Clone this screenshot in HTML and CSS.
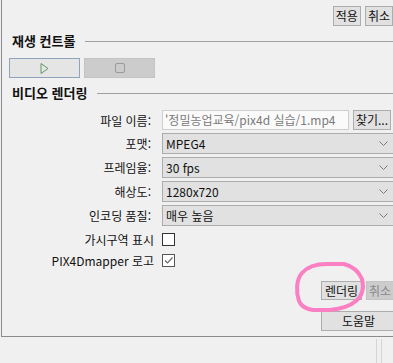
FILE: index.html
```html
<!DOCTYPE html>
<html lang="ko">

<head>
    <meta charset="UTF-8">
    <meta name="viewport" content="width=device-width, initial-scale=1.0">
    <title>비디오 렌더링</title>
    <link rel="stylesheet" href="styles.css">
</head>

<body>
    <div class="panel">
        <div class="top-actions">
            <button class="btn">적용</button>
            <button class="btn">취소</button>
        </div>

        <!-- Playback -->
        <div class="section-title"><span>재생 컨트롤</span><i class="rule"></i></div>
        <div class="playback">
            <button class="play-btn">
                <svg width="9" height="11" viewBox="0 0 9 11"><path d="M1 0.5 L8 5.5 L1 10.5 Z" fill="none" stroke="#5e9b5e" stroke-width="1"/></svg>
            </button>
            <button class="stop-btn">
                <svg width="10" height="10" viewBox="0 0 10 10"><rect x="0.5" y="0.5" width="9" height="9" rx="1.5" fill="none" stroke="#9a9a9a"/></svg>
            </button>
        </div>

        <!-- Video rendering -->
        <div class="section-title second"><span>비디오 렌더링</span><i class="rule"></i></div>
        <div class="form">
            <div class="row file-row">
                <label>파일 이름:</label>
                <div class="field">
                    <div class="path-input">'정밀농업교육/pix4d 실습/1.mp4</div>
                    <button class="btn find-btn">찾기...</button>
                </div>
            </div>
            <div class="row">
                <label>포맷:</label>
                <div class="combo">MPEG4<svg class="chev" width="9" height="5" viewBox="0 0 9 5"><path d="M0.5 0.5 L4.5 4.5 L8.5 0.5" fill="none" stroke="#7a7a7a"/></svg></div>
            </div>
            <div class="row">
                <label>프레임율:</label>
                <div class="combo">30 fps<svg class="chev" width="9" height="5" viewBox="0 0 9 5"><path d="M0.5 0.5 L4.5 4.5 L8.5 0.5" fill="none" stroke="#7a7a7a"/></svg></div>
            </div>
            <div class="row">
                <label>해상도:</label>
                <div class="combo">1280x720<svg class="chev" width="9" height="5" viewBox="0 0 9 5"><path d="M0.5 0.5 L4.5 4.5 L8.5 0.5" fill="none" stroke="#7a7a7a"/></svg></div>
            </div>
            <div class="row">
                <label>인코딩 품질:</label>
                <div class="combo">매우 높음<svg class="chev" width="9" height="5" viewBox="0 0 9 5"><path d="M0.5 0.5 L4.5 4.5 L8.5 0.5" fill="none" stroke="#7a7a7a"/></svg></div>
            </div>
            <div class="row check-row">
                <label>가시구역 표시</label>
                <span class="checkbox"></span>
            </div>
            <div class="row check-row">
                <label>PIX4Dmapper 로고</label>
                <span class="checkbox checked">
                    <svg width="11" height="11" viewBox="0 0 11 11"><path d="M2 5.5 L4.5 8 L9.5 2.5" fill="none" stroke="#6a6a6a" stroke-width="1.2"/></svg>
                </span>
            </div>
        </div>

        <div class="render-actions">
            <button class="btn render-btn">렌더링</button>
            <button class="btn disabled">취소</button>
        </div>
        <div class="help-actions">
            <button class="btn help-btn">도움말</button>
        </div>
    </div>

    <div class="footer">
        <i class="grip"></i>
        <i class="grip"></i>
    </div>

    <!-- hand drawn mark over the render button -->
    <svg class="mark" width="393" height="363" viewBox="0 0 393 363">
        <path d="M299 301 C296 292 296 280 302 273 C307 267 316 264 327 264 L344 264 C352 266 358 270 362 279 C364 287 363 295 356 301 C350 306 340 309 330 310 L313 310 C306 309 301 306 299 301" fill="none" stroke="#fb7fc3" stroke-width="4" stroke-linejoin="round"/>
    </svg>
</body>

</html>
```

FILE: styles.css
```css
/* General */
body {
    margin: 0;
    background: #f0f0f0;
    font-family: "Noto Sans CJK KR", "Noto Sans", sans-serif;
    font-size: 12px;
    color: #111;
    overflow: hidden;
    width: 393px;
    height: 363px;
    position: relative;
}

.panel {
    margin-left: 1px;
    width: 395px;
    height: 337px;
    box-sizing: border-box;
    border-left: 1px solid #8b8b8f;
    border-bottom: 1px solid #8b8b8f;
}

.btn {
    font-family: inherit;
    font-size: 12px;
    line-height: 16px;
    height: 20px;
    padding: 0 2px;
    margin: 0;
    background: #e1e1e1;
    border: 1px solid #adadad;
    color: #111;
}

/* Top */
.top-actions {
    display: flex;
    justify-content: flex-end;
    gap: 4px;
    padding: 6px 3px 0 0;
    height: 20px;
}

.section-title {
    display: flex;
    align-items: center;
    height: 16px;
    margin-top: 7px;
    padding-left: 10px;
    font-size: 13px;
    font-weight: bold;
    line-height: 16px;
}

.section-title .rule {
    flex: 1;
    height: 1px;
    background: #a0a0a0;
    margin-left: 10px;
}

.section-title.second {
    margin-top: 7px;
}

/* Playback */
.playback {
    display: flex;
    gap: 4px;
    padding-left: 7px;
    margin-top: 9px;
}

.play-btn,
.stop-btn {
    width: 71px;
    height: 20px;
    padding: 0;
    margin: 0;
    display: flex;
    align-items: center;
    justify-content: center;
}

.play-btn {
    background: #e5e5e5;
    border: 1px solid #8fa4bc;
}

.stop-btn {
    background: #cccccc;
    border: 1px solid #c4c4c4;
}

/* Form */
.form {
    margin-top: 9px;
}

.row {
    display: flex;
    align-items: center;
    height: 21px;
    margin-top: 3px;
}

.row label {
    width: 160px;
    box-sizing: border-box;
    padding-right: 11px;
    text-align: right;
    flex-shrink: 0;
}

.file-row {
    height: 20px;
    margin-top: 0;
}

.field {
    flex: 1;
    display: flex;
    gap: 4px;
    padding-right: 5px;
}

.path-input {
    width: 187px;
    height: 20px;
    box-sizing: border-box;
    background: #fafafa;
    border: 1px solid #cfcfcf;
    color: #7a7a7a;
    line-height: 18px;
    padding-left: 2px;
    white-space: nowrap;
    overflow: hidden;
}

.find-btn {
    width: 38px;
    padding: 0;
    line-height: 18px;
}

.combo {
    flex: 1;
    height: 21px;
    box-sizing: border-box;
    background: #e1e1e1;
    border: 1px solid #acacac;
    line-height: 19px;
    padding-left: 3px;
    display: flex;
    align-items: center;
    justify-content: space-between;
}

.chev {
    margin-right: 7px;
}

.check-row {
    margin-top: 3px;
}

.check-row + .check-row {
    margin-top: 0;
}

.check-row label {
    padding-right: 8px;
}

.checkbox {
    width: 13px;
    height: 13px;
    box-sizing: border-box;
    background: #fff;
    border: 1px solid #333;
    display: flex;
    align-items: center;
    justify-content: center;
}

.checkbox.checked {
    border-color: #555;
}

/* Bottom buttons */
.render-actions {
    display: flex;
    justify-content: flex-end;
    gap: 4px;
    margin-top: 10px;
    padding-left: 319px;
}

.render-actions .btn {
    height: 19px;
    line-height: 17px;
}

.render-btn {
    width: 41px;
}

.disabled {
    flex: 1;
    background: #cccccc;
    border-color: #c4c4c4;
    color: #8a8a8a;
    text-align: left;
}

.help-actions {
    display: flex;
    margin-top: 11px;
    padding-left: 319px;
}

.help-btn {
    flex: 1;
    height: 20px;
}

/* Footer */
.footer {
    display: flex;
    gap: 4px;
    padding: 2px 0 0 376px;
    height: 24px;
}

.grip {
    width: 1px;
    background: #d4d4d4;
}

.mark {
    position: absolute;
    left: 0;
    top: 0;
    pointer-events: none;
}
```
